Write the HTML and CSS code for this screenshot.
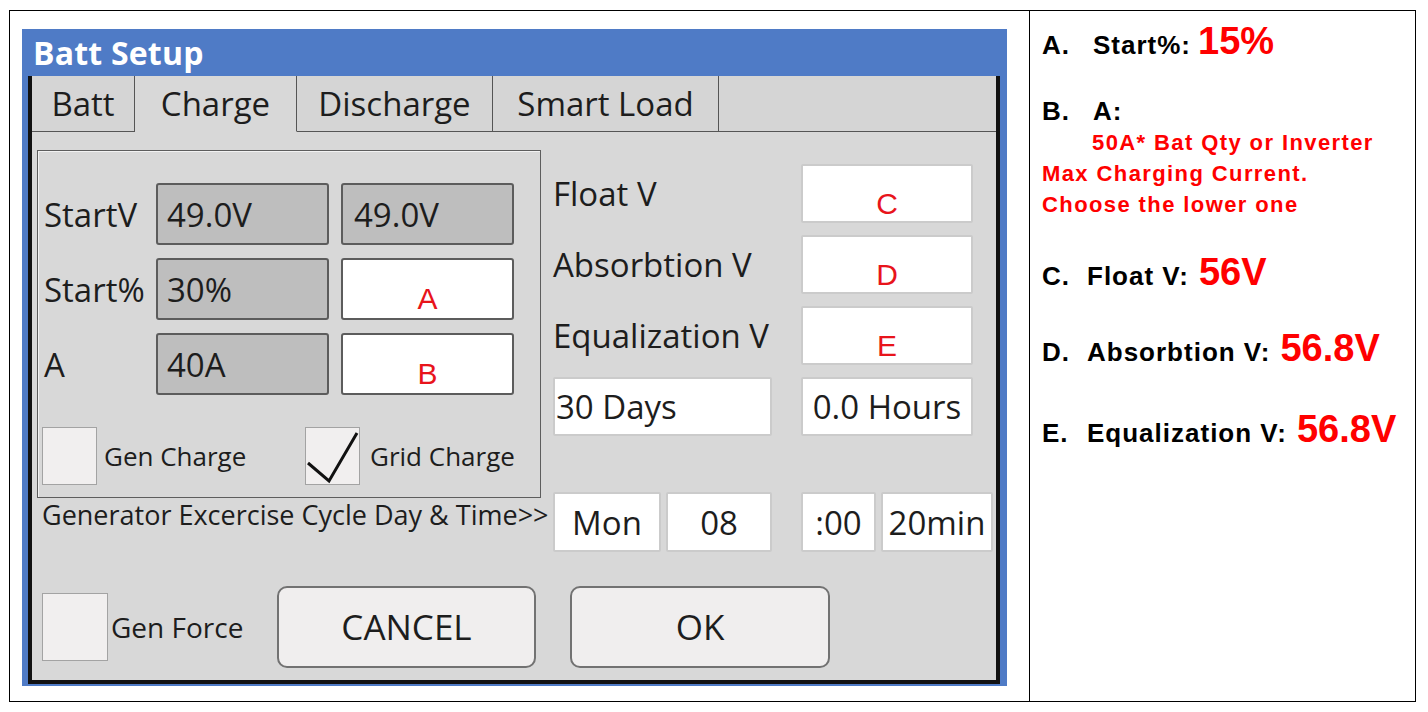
FILE: index.html
```html
<!DOCTYPE html>
<html lang="en">
<head>
  <meta charset="UTF-8">
  <meta name="viewport" content="width=device-width, initial-scale=1.0">
  <title>Batt Setup - Charge</title>
  <link rel="stylesheet" href="styles.css">
</head>
<body>
  <div class="sheet">
    <!-- left cell: the inverter screen -->
    <div class="shot">
      <div class="window">
        <div class="title">Batt Setup</div>
        <div class="frame">
          <div class="tabs">
            <div class="tab tab-batt">Batt</div>
            <div class="tab tab-charge active">Charge</div>
            <div class="tab tab-discharge">Discharge</div>
            <div class="tab tab-smart">Smart Load</div>
            <div class="tab tab-rest"></div>
          </div>

          <div class="panel">
            <div class="upper">
              <div class="left-col">
                <div class="group">
                  <div class="grow">
                    <span class="lbl">StartV</span>
                    <div class="field ro">49.0V</div>
                    <div class="field ro second">49.0V</div>
                  </div>
                  <div class="grow">
                    <span class="lbl">Start%</span>
                    <div class="field ro">30%</div>
                    <div class="field pick">A</div>
                  </div>
                  <div class="grow">
                    <span class="lbl">A</span>
                    <div class="field ro">40A</div>
                    <div class="field pick">B</div>
                  </div>
                  <div class="checks">
                    <div class="check-item first">
                      <span class="box"></span>
                      <span class="check-lbl">Gen Charge</span>
                    </div>
                    <div class="check-item">
                      <span class="box">
                        <svg width="55" height="58" viewBox="0 0 55 58">
                          <polyline points="3,36 24,54 52,6" fill="none" stroke="#111" stroke-width="3"/>
                        </svg>
                      </span>
                      <span class="check-lbl grid">Grid Charge</span>
                    </div>
                  </div>
                </div>
                <div class="gen-cycle">Generator Excercise Cycle Day &amp; Time&gt;&gt;</div>
              </div>

              <div class="right-col">
                <div class="vrow">
                  <span class="lbl">Float V</span>
                  <div class="field entry mark">C</div>
                </div>
                <div class="vrow">
                  <span class="lbl">Absorbtion V</span>
                  <div class="field entry mark">D</div>
                </div>
                <div class="vrow">
                  <span class="lbl">Equalization V</span>
                  <div class="field entry mark">E</div>
                </div>
                <div class="vrow">
                  <div class="field entry days">30 Days</div>
                  <div class="field entry hours">0.0 Hours</div>
                </div>
                <div class="time-row">
                  <div class="field entry t-day">Mon</div>
                  <div class="field entry t-hour">08</div>
                  <div class="field entry t-min">:00</div>
                  <div class="field entry t-len">20min</div>
                </div>
              </div>
            </div>

            <div class="actions">
              <span class="box force-box"></span>
              <span class="force-lbl">Gen Force</span>
              <button class="btn cancel">CANCEL</button>
              <button class="btn ok">OK</button>
            </div>
          </div>
        </div>
      </div>
    </div>

    <!-- right cell: the values to set -->
    <div class="notes">
      <div class="note wide">
        <span class="key">A.</span><span class="name">Start%:</span><span class="val">15%</span>
      </div>
      <div class="note wide note-b">
        <span class="key">B.</span><span class="name">A:</span>
      </div>
      <p class="note-text">50A* Bat Qty or Inverter<br>Max Charging Current.<br>Choose the lower one</p>
      <div class="note note-c">
        <span class="key">C.</span><span class="name">Float V:</span><span class="val">56V</span>
      </div>
      <div class="note note-d">
        <span class="key">D.</span><span class="name">Absorbtion V:</span><span class="val">56.8V</span>
      </div>
      <div class="note note-e">
        <span class="key">E.</span><span class="name">Equalization V:</span><span class="val">56.8V</span>
      </div>
    </div>
  </div>
</body>
</html>
```

FILE: styles.css
```css
/* General */
body {
  margin: 0;
  background: #fff;
  font-family: "Open Sans", Arial, sans-serif;
  color: #1d1d1d;
}

.sheet {
  box-sizing: border-box;
  width: 1407px;
  height: 692px;
  margin: 10px 0 0 9px;
  border: 1px solid #000;
  display: grid;
  grid-template-columns: 1020px 1fr;
}

.shot {
  border-right: 1px solid #000;
  padding: 18px 0 0 12px;
}

/* Window */
.window {
  width: 985px;
  height: 657px;
  background: #4f7bc6;
  display: flex;
  flex-direction: column;
}

.title {
  height: 47px;
  line-height: 47px;
  padding-left: 11px;
  color: #fff;
  font-size: 32px;
  font-weight: bold;
  letter-spacing: 0.2px;
}

.frame {
  flex: 1;
  margin: 0 7px 3px 6px;
  border: 4px solid #111;
  border-top: 0;
  background: #d8d8d8;
  display: flex;
  flex-direction: column;
}

/* Tabs */
.tabs {
  display: flex;
  height: 56px;
}

.tab {
  box-sizing: border-box;
  display: flex;
  align-items: center;
  justify-content: center;
  background: #d5d5d5;
  border-right: 1px solid #555;
  border-bottom: 1px solid #555;
  font-size: 33px;
}

.tab-batt { width: 103px; }
.tab-charge { width: 162px; }
.tab-discharge { width: 196px; }
.tab-smart { width: 226px; }

.tab-rest {
  flex: 1;
  border-right: none;
}

.tab.active {
  background: #d8d8d8;
  border-bottom-color: transparent;
}

/* Panel */
.panel {
  flex: 1;
  padding: 18px 0 12px 5px;
}

.upper {
  display: flex;
  align-items: flex-start;
}

.left-col {
  width: 504px;
}

.group {
  box-sizing: border-box;
  height: 348px;
  border: 1px solid #5d5d5d;
  box-shadow: inset 1px 1px 0 #f2f2f2;
  padding: 32px 0 0 0;
}

.grow {
  display: flex;
  align-items: center;
  height: 62px;
  padding-left: 6px;
}

.grow + .grow {
  margin-top: 13px;
}

.lbl {
  font-size: 33px;
  white-space: nowrap;
}

.grow .lbl {
  width: 112px;
}

.field {
  box-sizing: border-box;
  display: flex;
  align-items: center;
  font-size: 33px;
  white-space: nowrap;
}

.ro {
  width: 173px;
  height: 62px;
  background: #bebebe;
  border: 2px solid #5c5c5c;
  border-radius: 3px;
  padding-left: 9px;
}

.ro.second {
  margin-left: 12px;
  padding-left: 11px;
}

.pick {
  width: 173px;
  height: 62px;
  margin-left: 12px;
  background: #fff;
  border: 2px solid #5c5c5c;
  border-radius: 3px;
}

.pick, .mark {
  justify-content: center;
  padding-top: 20px;
  color: #e8141b;
  font-family: "Liberation Sans", Arial, sans-serif;
  font-size: 30px;
}

.checks {
  display: flex;
  align-items: center;
  margin-top: 32px;
  padding-left: 4px;
}

.check-item {
  display: flex;
  align-items: center;
}

.check-item.first {
  width: 263px;
}

.box {
  box-sizing: border-box;
  display: block;
  width: 55px;
  height: 58px;
  background: #f1efef;
  border: 1px solid #a3a3a3;
}

.box svg {
  display: block;
  margin: -1px;
}

.check-lbl {
  margin-left: 7px;
  font-size: 26px;
}

.check-lbl.grid {
  margin-left: 10px;
}

.gen-cycle {
  padding-left: 5px;
  height: 34px;
  line-height: 34px;
  font-size: 27px;
  white-space: nowrap;
}

/* Right fields */
.right-col {
  margin-left: 12px;
  padding-top: 14px;
}

.vrow {
  display: flex;
  align-items: center;
  height: 59px;
}

.vrow + .vrow {
  margin-top: 12px;
}

.vrow .lbl {
  width: 248px;
}

.entry {
  height: 59px;
  background: #fff;
  border: 2px solid #cbcbcb;
  border-radius: 2px;
}

.mark {
  width: 172px;
}

.days {
  width: 219px;
  padding-left: 1px;
}

.hours {
  width: 172px;
  margin-left: 29px;
  justify-content: center;
}

.time-row {
  display: flex;
  margin-top: 56px;
}

.time-row .entry {
  height: 60px;
  justify-content: center;
}

.t-day { width: 108px; }
.t-hour { width: 106px; margin-left: 5px; }
.t-min { width: 75px; margin-left: 29px; }
.t-len { width: 112px; margin-left: 5px; }

/* Bottom buttons */
.actions {
  display: flex;
  align-items: center;
  height: 83px;
  margin-top: 33px;
}

.force-box {
  width: 66px;
  height: 68px;
  margin-left: 5px;
}

.force-lbl {
  box-sizing: border-box;
  width: 169px;
  padding-left: 3px;
  font-size: 28px;
}

.btn {
  box-sizing: border-box;
  height: 82px;
  background: #f0eeee;
  border: 2px solid #727272;
  border-radius: 10px;
  font-family: "Open Sans", Arial, sans-serif;
  font-size: 35px;
  color: #1d1d1d;
  padding: 0;
}

.cancel {
  width: 259px;
}

.ok {
  width: 260px;
  margin-left: 34px;
}

/* Notes cell */
.notes {
  padding: 11px 0 0 12px;
  font-family: "Liberation Sans", Arial, sans-serif;
  font-weight: bold;
  color: #000;
}

.note {
  display: flex;
  align-items: baseline;
  line-height: 1;
  font-size: 26px;
  letter-spacing: 1px;
  white-space: nowrap;
}

.note .key {
  width: 45px;
}

.note.wide .key {
  width: 51px;
}

.note .val {
  margin-left: 10px;
  font-size: 38px;
  letter-spacing: 0;
  color: #f00;
}

.note.wide .val {
  margin-left: 7px;
}

.note-b {
  margin-top: 38px;
}

.note-text {
  margin: 3px 0 0 0;
  font-size: 22px;
  line-height: 31px;
  letter-spacing: 1.4px;
  text-indent: 50px;
  color: #f00;
  white-space: nowrap;
}

.note-c {
  margin-top: 33px;
}

.note-d {
  margin-top: 38px;
}

.note-e {
  margin-top: 43px;
}
```
